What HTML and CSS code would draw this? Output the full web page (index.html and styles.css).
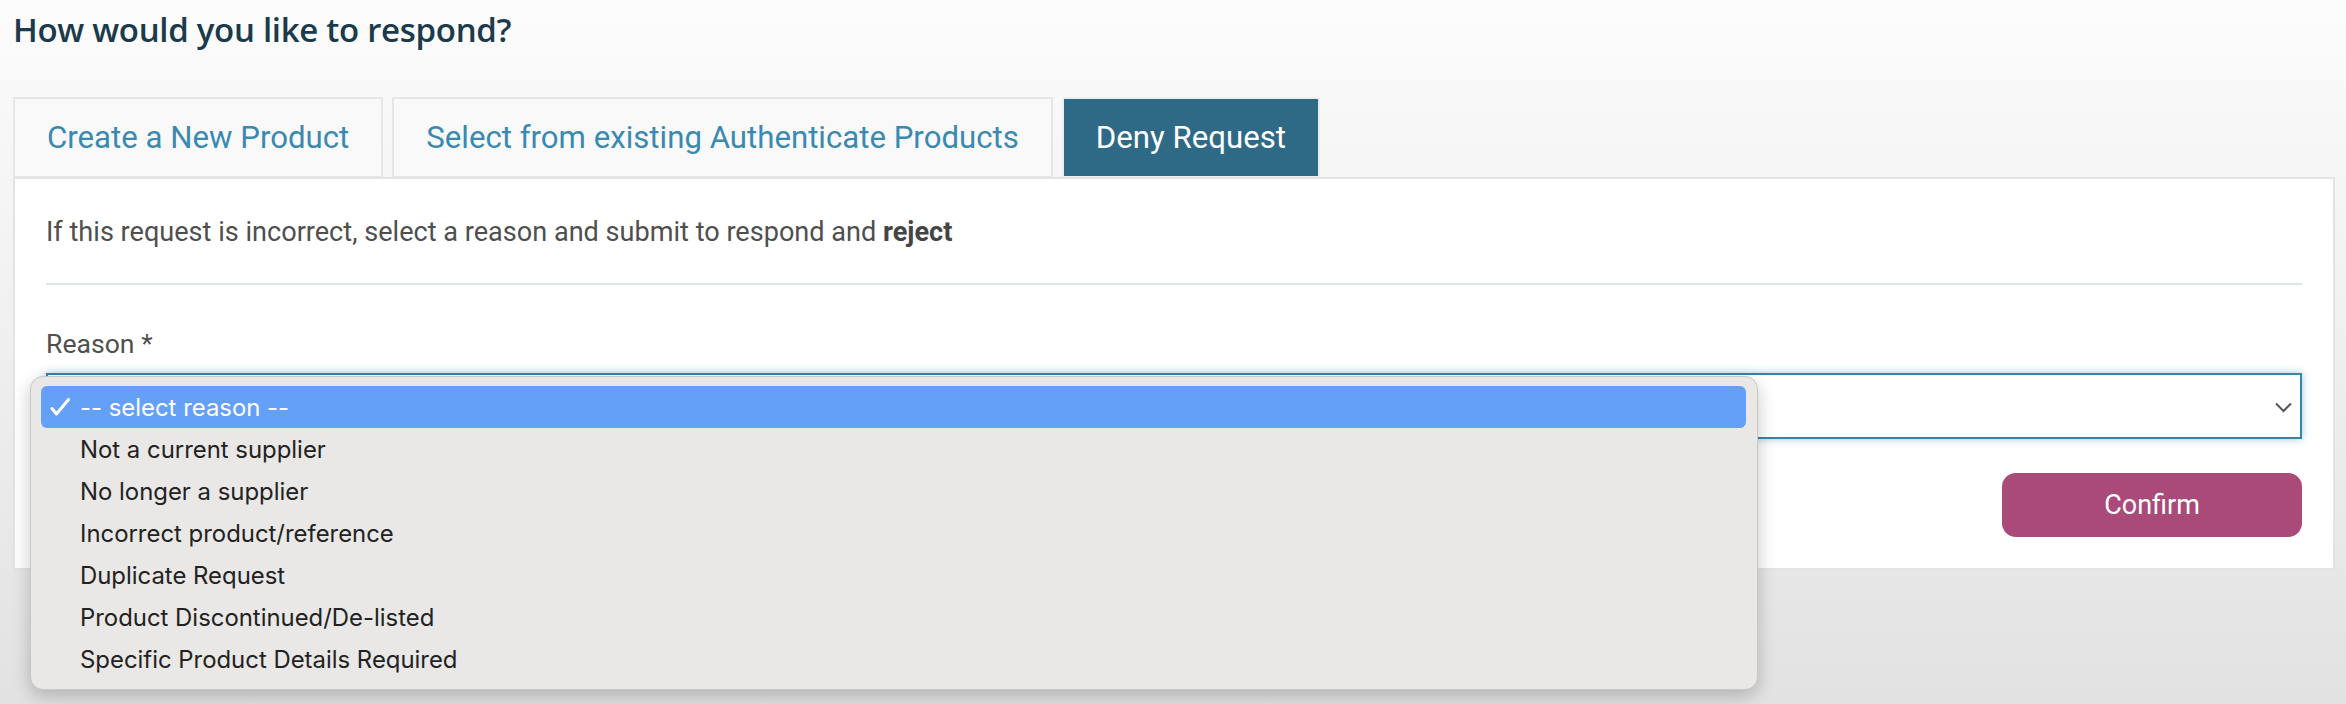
FILE: index.html
```html
<!DOCTYPE html>
<html lang="en">
<head>
<meta charset="utf-8">
<title>How would you like to respond?</title>
<link rel="stylesheet" href="styles.css">
</head>
<body>
<div class="page">
  <h1 class="title">How would you like to respond?</h1>
  <div class="tabs">
    <div class="tab">Create a New Product</div>
    <div class="tab">Select from existing Authenticate Products</div>
    <div class="tab tab-active">Deny Request</div>
  </div>
  <div class="panel">
    <p class="intro">If this request is incorrect, select a reason and submit to respond and <b>reject</b></p>
    <hr class="divider">
    <label class="label">Reason *</label>
    <div class="select">
      <svg class="chevron" width="17" height="11" viewBox="0 0 17 11"><path d="M1 1.5 L8.5 9 L16 1.5" fill="none" stroke="#555" stroke-width="2"/></svg>
    </div>
    <div class="actions">
      <button class="confirm">Confirm</button>
    </div>
  </div>
  <div class="menu">
    <div class="opt opt-selected"><span class="check"><svg width="20" height="18" viewBox="0 0 20 18"><path d="M2 10.5 L6.5 16 L18.5 1.5" fill="none" stroke="#fff" stroke-width="3" stroke-linecap="round" stroke-linejoin="round"/></svg></span>-- select reason --</div>
    <div class="opt"><span class="check"></span>Not a current supplier</div>
    <div class="opt"><span class="check"></span>No longer a supplier</div>
    <div class="opt"><span class="check"></span>Incorrect product/reference</div>
    <div class="opt"><span class="check"></span>Duplicate Request</div>
    <div class="opt"><span class="check"></span>Product Discontinued/De-listed</div>
    <div class="opt"><span class="check"></span>Specific Product Details Required</div>
  </div>
</div>
</body>
</html>
```

FILE: styles.css
```css
html, body {
  margin: 0;
  height: 100%;
}
body {
  background: linear-gradient(#fcfcfc 0px, #e2e2e2 704px);
  font-family: Roboto, "Liberation Sans", sans-serif;
  min-height: 704px;
}
.page {
  position: relative;
  padding: 0 11px 0 13px;
}
.title {
  margin: 0;
  padding-top: 8px;
  font-family: "Open Sans", sans-serif;
  font-weight: 600;
  font-size: 33px;
  line-height: 43px;
  color: #1b3a4b;
  letter-spacing: -0.3px;
}
.tabs {
  display: flex;
  gap: 9px;
  margin-top: 46px;
}
.tab {
  box-sizing: border-box;
  height: 80px;
  padding: 0 32px;
  border: 2px solid #e6e6e6;
  border-bottom-width: 1px;
  background: #f9f9f9;
  color: #3a89b1;
  font-size: 31.2px;
  display: flex;
  align-items: center;
}
.tab-active {
  background: #2e6a85;
  color: #ffffff;
  border-color: #e9eef0;
}
.panel {
  background: #ffffff;
  border: 2px solid #e3e3e3;
  padding: 35px 31px 31px 31px;
}
.intro {
  margin: 0;
  font-size: 27.1px;
  line-height: 36px;
  color: #4f4f4f;
}
.intro b {
  color: #444;
}
.divider {
  margin: 33px 0 0 0;
  border: 0;
  height: 2px;
  background: #dfe4e8;
}
.label {
  display: block;
  margin-top: 41px;
  font-size: 26.6px;
  line-height: 36px;
  color: #4f4f4f;
}
.select {
  box-sizing: border-box;
  margin-top: 11px;
  height: 66px;
  border: 2px solid #3a82a6;
  background: #fff;
  box-shadow: 0 0 8px rgba(58, 130, 166, 0.45);
  display: flex;
  align-items: center;
  justify-content: flex-end;
  padding-right: 8px;
}
.chevron {
  display: block;
  margin-top: 3px;
}
.actions {
  display: flex;
  justify-content: flex-end;
  margin-top: 34px;
}
.confirm {
  width: 300px;
  height: 64px;
  border: 0;
  border-radius: 14px;
  background: #a94a78;
  color: #fff;
  font-family: Roboto, "Liberation Sans", sans-serif;
  font-size: 27px;
}
.menu {
  position: absolute;
  left: 30px;
  top: 376px;
  width: 1728px;
  box-sizing: border-box;
  padding: 9px 11px 9px 10px;
  background: #e9e8e6;
  border: 1px solid #c9c8c6;
  border-radius: 13px;
  box-shadow: 0 6px 18px rgba(0, 0, 0, 0.22);
  font-family: Inter, "Noto Sans", sans-serif;
  font-size: 23.9px;
  color: #222;
}
.opt {
  height: 42px;
  display: flex;
  align-items: center;
  border-radius: 6px;
}
.opt-selected {
  background: #64a0f8;
  color: #fff;
}
.check {
  width: 39px;
  padding-left: 9px;
  box-sizing: border-box;
  display: flex;
  align-items: center;
}
.check svg {
  display: block;
}
```
